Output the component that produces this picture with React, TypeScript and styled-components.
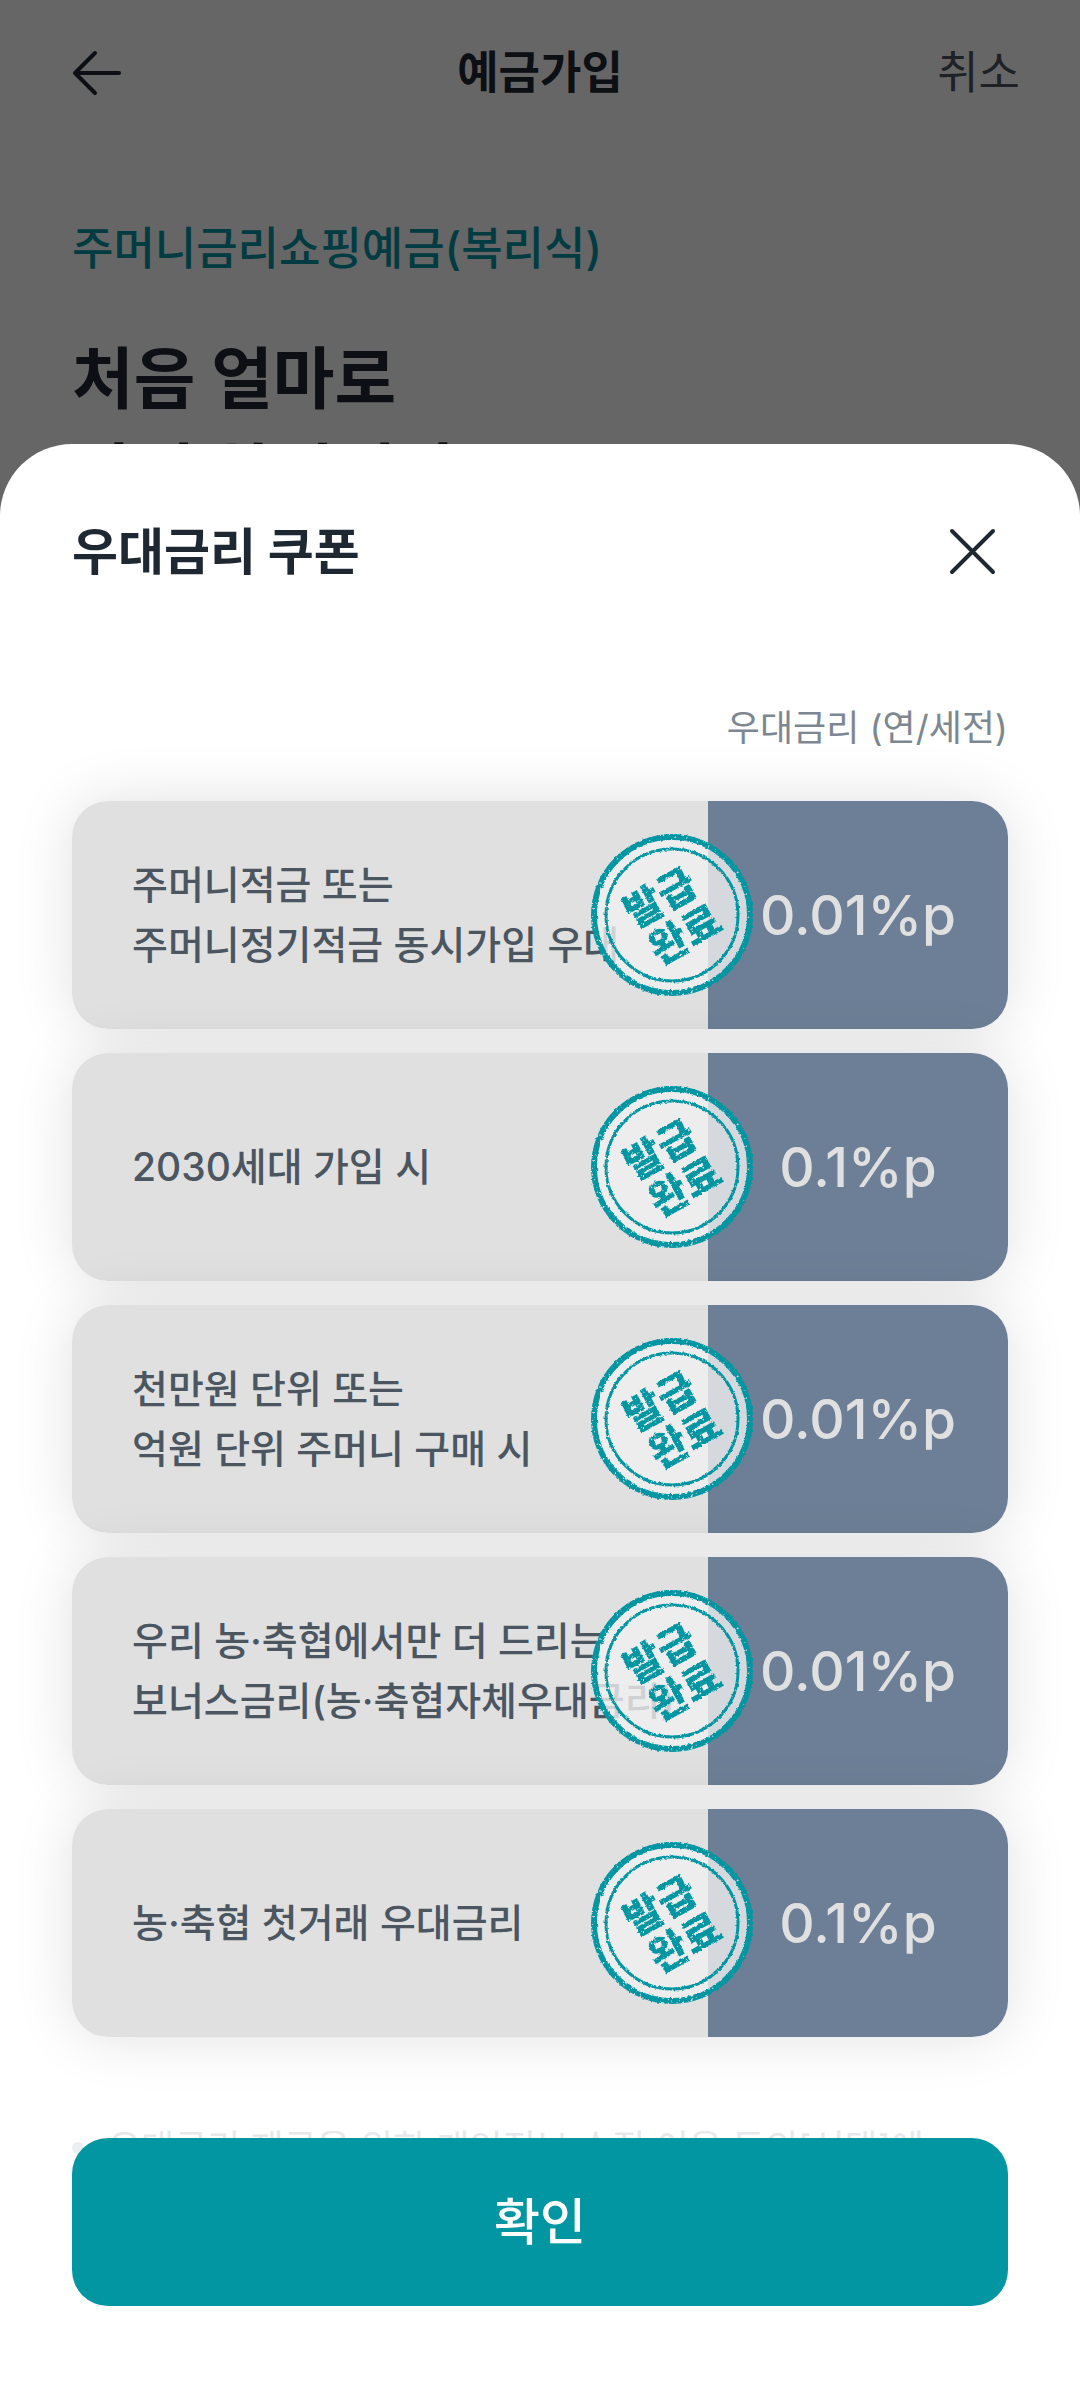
import React from "react";
import styled, { createGlobalStyle } from "styled-components";

const GlobalStyle = createGlobalStyle`
  *, *::before, *::after { box-sizing: border-box; }
  body { margin: 0; background: #666; font-family: Inter, "Noto Sans CJK KR", sans-serif; color: #1e2832; }
  h1, h2, p, ul { margin: 0; padding: 0; }
  button { font-family: inherit; border: 0; background: none; padding: 0; cursor: pointer; }
`;

const Screen = styled.div`
  position: relative;
  min-height: 100vh;
  display: flex;
  flex-direction: column;
  overflow: hidden;
`;

const Page = styled.main`
  position: absolute;
  inset: 0;
  background: #fff;
`;

const TopBar = styled.header`
  display: grid;
  grid-template-columns: 1fr auto 1fr;
  align-items: center;
  height: 146px;
  padding: 0 60px;
`;

const BackButton = styled.button`
  display: flex;
  justify-self: start;
  padding-left: 12px;
`;

const BarTitle = styled.h1`
  font-size: 45px;
  line-height: 60px;
  font-weight: 700;
`;

const CancelButton = styled.button`
  justify-self: end;
  font-size: 45px;
  line-height: 60px;
  color: #4b5661;
`;

const Intro = styled.section`
  display: flex;
  flex-direction: column;
  gap: 52px;
  padding: 73px 72px 0;
`;

const ProductName = styled.p`
  font-size: 45px;
  line-height: 60px;
  font-weight: 500;
  color: #0296a3;
`;

const Question = styled.p`
  font-size: 67px;
  line-height: 96px;
  font-weight: 700;
`;

const Dim = styled.div`
  position: absolute;
  inset: 0;
  background: rgba(0, 0, 0, 0.6);
`;

const Sheet = styled.section`
  position: relative;
  flex: 1;
  margin-top: 444px;
  padding: 72px 72px 0;
  border-radius: 72px 72px 0 0;
  background: #fff;
  display: flex;
  flex-direction: column;
`;

const SheetHeader = styled.header`
  display: flex;
  justify-content: space-between;
  align-items: center;
  height: 72px;
`;

const SheetTitle = styled.h2`
  font-size: 50px;
  line-height: 72px;
  font-weight: 700;
`;

const CloseButton = styled.button`
  display: flex;
`;

const Caption = styled.p`
  margin-top: 112px;
  text-align: right;
  font-size: 36px;
  line-height: 56px;
  color: #7d8791;
`;

const CouponList = styled.ul`
  list-style: none;
  margin-top: 45px;
  display: flex;
  flex-direction: column;
  gap: 24px;
`;

const Coupon = styled.li`
  position: relative;
  display: flex;
  height: 228px;
  border-radius: 36px;
  box-shadow: 0 0 60px rgba(0, 0, 0, 0.12);
`;

const Description = styled.div`
  flex: 1;
  display: flex;
  align-items: center;
  padding-left: 60px;
  border-radius: 36px 0 0 36px;
  background: #e0e0e0;
  color: #4b5661;
  font-size: 39px;
  line-height: 60px;
  font-weight: 500;
  white-space: pre-line;
`;

const Rate = styled.div`
  flex: 0 0 300px;
  display: flex;
  align-items: center;
  justify-content: center;
  border-radius: 0 36px 36px 0;
  background: #6c7f96;
  color: #e0e0e0;
  font-size: 55px;
  line-height: 72px;
  font-weight: 500;
`;

const StampMark = styled.svg`
  position: absolute;
  right: 255px;
  top: 33px;
  width: 162px;
  height: 162px;
`;

const NoteList = styled.ul`
  list-style: none;
  margin-top: 84px;
  color: #e6e8ea;
  font-size: 36px;
  line-height: 54px;
`;

const Note = styled.li`
  display: flex;
  align-items: center;
  gap: 24px;

  &::before {
    content: "";
    width: 12px;
    height: 12px;
    border-radius: 50%;
    background: #eceeef;
  }
`;

const Footer = styled.footer`
  position: absolute;
  left: 0;
  right: 0;
  bottom: 0;
  padding: 0 72px 96px;
`;

const ConfirmButton = styled.button`
  display: block;
  width: 100%;
  height: 168px;
  border-radius: 36px;
  background: #0296a3;
  color: #fff;
  font-size: 50px;
  line-height: 72px;
  font-weight: 500;
`;

const FilterDefs = styled.svg`
  position: absolute;
  width: 0;
  height: 0;
`;

const coupons = [
  { text: "주머니적금 또는\n주머니정기적금 동시가입 우대", rate: "0.01%p" },
  { text: "2030세대 가입 시", rate: "0.1%p" },
  { text: "천만원 단위 또는\n억원 단위 주머니 구매 시", rate: "0.01%p" },
  { text: "우리 농·축협에서만 더 드리는\n보너스금리(농·축협자체우대금리)", rate: "0.01%p" },
  { text: "농·축협 첫거래 우대금리", rate: "0.1%p" },
];

function Stamp() {
  return (
    <StampMark viewBox="0 0 162 162" role="img" aria-label="발급완료">
      <circle cx="81" cy="81" r="79" fill="#f0f0f0" fillOpacity="0.8" />
      <g filter="url(#worn)">
        <circle cx="81" cy="81" r="78" fill="none" stroke="#0296a3" strokeWidth="6" />
        <circle cx="81" cy="81" r="66" fill="none" stroke="#0296a3" strokeWidth="3" />
        <g
          transform="rotate(-29 81 81)"
          fill="#0296a3"
          fontFamily="'Noto Sans CJK KR', sans-serif"
          fontSize="41"
          fontWeight="900"
          textAnchor="middle"
        >
          <text x="79" y="75">발급</text>
          <text x="83" y="119">완료</text>
        </g>
      </g>
    </StampMark>
  );
}

export default function App() {
  return (
    <>
      <GlobalStyle />
      <FilterDefs aria-hidden="true">
        <filter id="worn" x="-5%" y="-5%" width="110%" height="110%" colorInterpolationFilters="sRGB">
          <feTurbulence type="fractalNoise" baseFrequency="0.35" numOctaves="2" seed="4" result="grain" />
          <feDisplacementMap
            in="SourceGraphic"
            in2="grain"
            scale="3"
            xChannelSelector="R"
            yChannelSelector="G"
            result="rough"
          />
          <feColorMatrix in="grain" type="matrix" values="0 0 0 0 0  0 0 0 0 0  0 0 0 0 0  0 0 0 -6 4.9" result="holes" />
          <feComposite in="rough" in2="holes" operator="in" />
        </filter>
      </FilterDefs>
      <Screen>
        <Page>
          <TopBar>
            <BackButton aria-label="뒤로">
              <svg width="50" height="48" viewBox="0 0 50 48" fill="none" stroke="#1e2832" strokeWidth="4" strokeLinecap="round" strokeLinejoin="round">
                <path d="M47 24H4M23 4L3 24l20 20" />
              </svg>
            </BackButton>
            <BarTitle>예금가입</BarTitle>
            <CancelButton>취소</CancelButton>
          </TopBar>
          <Intro>
            <ProductName>주머니금리쇼핑예금(복리식)</ProductName>
            <Question>
              처음 얼마로
              <br />
              가입 하시려나
            </Question>
          </Intro>
        </Page>
        <Dim />
        <Sheet role="dialog" aria-labelledby="sheet-title">
          <SheetHeader>
            <SheetTitle id="sheet-title">우대금리 쿠폰</SheetTitle>
            <CloseButton aria-label="닫기">
              <svg width="72" height="72" viewBox="0 0 72 72" fill="none" stroke="#1e2832" strokeWidth="4" strokeLinecap="round">
                <path d="M16 15l41 41M57 15L16 56" />
              </svg>
            </CloseButton>
          </SheetHeader>
          <Caption>우대금리 (연/세전)</Caption>
          <CouponList>
            {coupons.map((coupon) => (
              <Coupon key={coupon.text}>
                <Description>
                  <p>{coupon.text}</p>
                </Description>
                <Rate>{coupon.rate}</Rate>
                <Stamp />
              </Coupon>
            ))}
          </CouponList>
          <NoteList>
            <Note>우대금리 제공을 위한 개인정보 수집·이용 동의[선택]에</Note>
          </NoteList>
          <Footer>
            <ConfirmButton>확인</ConfirmButton>
          </Footer>
        </Sheet>
      </Screen>
    </>
  );
}
